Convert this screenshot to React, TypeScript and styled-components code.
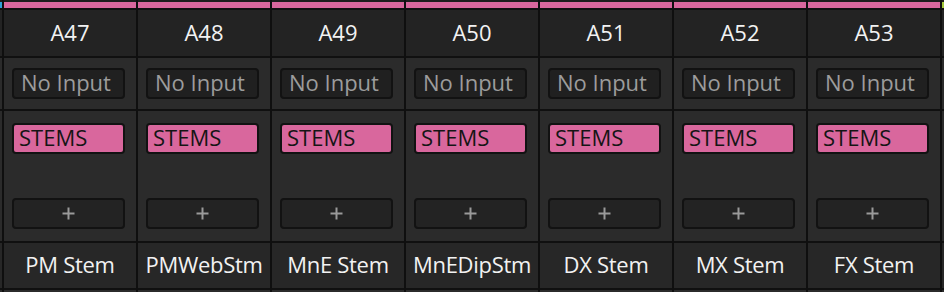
import React from "react";
import styled, { createGlobalStyle } from "styled-components";

const Global = createGlobalStyle`
  html, body { margin: 0; padding: 0; background: #2a2a2a; }
  body { font-family: "Open Sans", "DejaVu Sans", sans-serif; }
`;

const Strip = styled.div`
  display: flex;
  width: 944px;
  height: 292px;
  overflow: hidden;
  background: #2a2a2a;
`;

const Column = styled.div<{ $w: number }>`
  display: flex;
  flex-direction: column;
  width: ${(p) => p.$w}px;
  flex: none;
  background: #2b2b2b;
`;

const Divider = styled.div`
  width: 2px;
  flex: none;
  background: #0f0f0f;
`;

const TopGap = styled.div`
  height: 2px;
  background: #1c1c1c;
`;

const ColorBar = styled.div<{ $c: string }>`
  height: 6px;
  background: ${(p) => p.$c};
`;

const Header = styled.div`
  box-sizing: border-box;
  height: 48px;
  border-top: 2px solid #101010;
  background: #232323;
  color: #f2f2f2;
  font-size: 22px;
  display: flex;
  align-items: center;
  justify-content: center;
  padding-bottom: 2px;
`;

const InputRow = styled.div`
  height: 53px;
  box-sizing: border-box;
  border-top: 2px solid #101010;
  padding: 10px 11px 0 8px;
  display: flex;
  flex-direction: column;
`;

const Body = styled.div`
  height: 132px;
  box-sizing: border-box;
  border-top: 2px solid #101010;
  padding: 12px 11px 12px 8px;
  display: flex;
  flex-direction: column;
  justify-content: space-between;
`;

const NameRow = styled.div`
  height: 49px;
  box-sizing: border-box;
  border-top: 2px solid #101010;
  border-bottom: 2px solid #101010;
  background: #272727;
  color: #f2f2f2;
  font-size: 22px;
  display: flex;
  align-items: center;
  justify-content: center;
  white-space: nowrap;
  letter-spacing: -0.3px;
  padding-bottom: 3px;
`;

const Box = styled.div<{ $variant: "input" | "group" | "add" }>`
  height: 31px;
  box-sizing: border-box;
  border: 2px solid #121212;
  border-radius: 4px;
  display: flex;
  align-items: center;
  font-size: 22px;
  white-space: nowrap;
  overflow: hidden;
  padding-bottom: 3px;
  background: ${(p) =>
    p.$variant === "group" ? "#d9679d" : p.$variant === "add" ? "#232323" : "#202020"};
  color: ${(p) =>
    p.$variant === "group" ? "#151515" : p.$variant === "add" ? "#a0a0a0" : "#9c9c9c"};
  padding-left: ${(p) => (p.$variant === "group" ? "5px" : "7px")};
  justify-content: ${(p) => (p.$variant === "add" ? "center" : "flex-start")};
  ${(p) => (p.$variant === "add" ? "padding-left: 0; padding-bottom: 0;" : "")}
`;

const PlusIcon = () => (
  <svg width="13" height="13" viewBox="0 0 13 13" aria-hidden="true">
    <path d="M6.5 0.5v12M0.5 6.5h12" stroke="#9a9a9a" strokeWidth="2" fill="none" />
  </svg>
);

const EdgeCol = ({ color }: { color: string }) => (
  <Column $w={2}>
    <TopGap />
    <ColorBar $c={color} />
    <Header />
    <InputRow />
    <Body />
    <NameRow />
  </Column>
);

const channels = [
  { id: "A47", name: "PM Stem" },
  { id: "A48", name: "PMWebStm" },
  { id: "A49", name: "MnE Stem" },
  { id: "A50", name: "MnEDipStm" },
  { id: "A51", name: "DX Stem" },
  { id: "A52", name: "MX Stem" },
  { id: "A53", name: "FX Stem" },
];

export default function App() {
  return (
    <>
      <Global />
      <Strip>
        <EdgeCol color="#2f9fd6" />
        {channels.map((c) => (
          <React.Fragment key={c.id}>
            <Divider />
            <Column $w={132}>
              <TopGap />
              <ColorBar $c="#d9679d" />
              <Header>{c.id}</Header>
              <InputRow>
                <Box $variant="input">No Input</Box>
              </InputRow>
              <Body>
                <Box $variant="group">STEMS</Box>
                <Box $variant="add">
                  <PlusIcon />
                </Box>
              </Body>
              <NameRow>{c.name}</NameRow>
            </Column>
          </React.Fragment>
        ))}
        <Divider />
        <EdgeCol color="#a4c93a" />
      </Strip>
    </>
  );
}
